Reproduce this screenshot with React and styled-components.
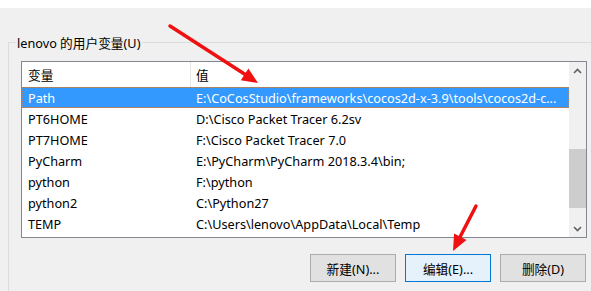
import styled, { createGlobalStyle } from 'styled-components'

const GlobalStyle = createGlobalStyle`
  html, body {
    margin: 0;
    padding: 0;
    background: #f0f0f0;
  }
  body {
    font-family: "Microsoft YaHei UI", "Noto Sans", "Noto Sans CJK SC", sans-serif;
    font-size: 12.7px;
    color: #000;
  }
`

const Page = styled.div`
  position: relative;
  width: 591px;
  height: 291px;
  overflow: hidden;
  background: #f0f0f0;
`

const TopStrip = styled.div`
  height: 8px;
  background: #fff;
`

const Group = styled.section`
  margin: 34px 0 0 8px;
  border-top: 1px solid #dcdcdc;
  border-left: 1px solid #dcdcdc;
  height: 260px;
`

const Legend = styled.div`
  width: fit-content;
  margin: -8px 0 0 7px;
  padding: 0 2px 0 1px;
  background: #f0f0f0;
  line-height: 16px;
  height: 16px;
`

const GroupBody = styled.div`
  padding: 10px 4px 0 12px;
`

const ListView = styled.div`
  display: flex;
  height: 175px;
  border: 1px solid #828790;
  background: #fff;
`

const ListMain = styled.div`
  flex: 1;
  display: flex;
  flex-direction: column;
`

const Row = styled.div`
  display: grid;
  grid-template-columns: 168px 1fr;
  height: ${({ $header }) => ($header ? '25px' : '21px')};
  align-items: center;
  background: ${({ $selected }) => ($selected ? '#3399ff' : 'transparent')};
  color: ${({ $selected }) => ($selected ? '#fff' : '#000')};
  outline: ${({ $selected }) => ($selected ? '1px dotted rgba(214, 130, 50, 0.75)' : 'none')};
  outline-offset: -1px;
  white-space: nowrap;
`

const Cell = styled.div`
  overflow: hidden;
  height: 100%;
  display: flex;
  align-items: center;
  border-left: ${({ $sep }) => ($sep ? '1px solid #e5e5e5' : 'none')};
  padding-left: ${({ $sep }) => ($sep ? '5px' : '6px')};
`

const ScrollBar = styled.div`
  width: 17px;
  display: flex;
  flex-direction: column;
  background: #f0f0f0;
`

const ScrollArrow = styled.div`
  height: 17px;
  display: flex;
  align-items: center;
  justify-content: center;
`

const Track = styled.div`
  flex: 1;
  display: flex;
  flex-direction: column;
`

const Thumb = styled.div`
  margin-top: 70px;
  height: 59px;
  background: #cdcdcd;
`

const ButtonRow = styled.div`
  display: flex;
  justify-content: flex-end;
  gap: 9px;
  margin-top: 16px;
  padding-right: 1px;
`

const Button = styled.button`
  width: 86px;
  height: 28px;
  padding: 0;
  font-family: inherit;
  font-size: 12.7px;
  color: #000;
  background: ${({ $focused }) => ($focused ? '#e5f1fb' : '#e1e1e1')};
  border: 1px solid ${({ $focused }) => ($focused ? '#0078d7' : '#adadad')};
  border-radius: 0;
`

const Annotation = styled.svg`
  position: absolute;
  left: 0;
  top: 0;
  pointer-events: none;
`

const rows = [
  ['Path', 'E:\\CoCosStudio\\frameworks\\cocos2d-x-3.9\\tools\\cocos2d-c...'],
  ['PT6HOME', 'D:\\Cisco Packet Tracer 6.2sv'],
  ['PT7HOME', 'F:\\Cisco Packet Tracer 7.0'],
  ['PyCharm', 'E:\\PyCharm\\PyCharm 2018.3.4\\bin;'],
  ['python', 'F:\\python'],
  ['python2', 'C:\\Python27'],
  ['TEMP', 'C:\\Users\\lenovo\\AppData\\Local\\Temp'],
]

function Chevron({ down }) {
  return (
    <svg width="9" height="6" viewBox="0 0 9 6">
      <path
        d={down ? 'M1 1 L4.5 4.5 L8 1' : 'M1 5 L4.5 1.5 L8 5'}
        fill="none"
        stroke="#606060"
        strokeWidth="1.6"
      />
    </svg>
  )
}

export default function App() {
  return (
    <Page>
      <GlobalStyle />
      <TopStrip />
      <Group>
        <Legend>lenovo 的用户变量(U)</Legend>
        <GroupBody>
          <ListView>
            <ListMain>
              <Row $header>
                <Cell>变量</Cell>
                <Cell $sep>值</Cell>
              </Row>
              {rows.map(([name, value], i) => (
                <Row key={name} $selected={i === 0}>
                  <Cell>{name}</Cell>
                  <Cell>{value}</Cell>
                </Row>
              ))}
            </ListMain>
            <ScrollBar>
              <ScrollArrow><Chevron /></ScrollArrow>
              <Track><Thumb /></Track>
              <ScrollArrow><Chevron down /></ScrollArrow>
            </ScrollBar>
          </ListView>
          <ButtonRow>
            <Button>新建(N)...</Button>
            <Button $focused>编辑(E)...</Button>
            <Button>删除(D)</Button>
          </ButtonRow>
        </GroupBody>
      </Group>
      <Annotation width="591" height="291" viewBox="0 0 591 291">
        <line x1="170" y1="26" x2="246" y2="75" stroke="#f01010" strokeWidth="3.5" strokeLinecap="round" />
        <polygon points="258,83 240.8,80.2 248.4,68.4" fill="#f01010" />
        <line x1="476" y1="206" x2="460" y2="237" stroke="#f01010" strokeWidth="3.5" strokeLinecap="round" />
        <polygon points="453,251 466.5,239.9 454.1,233.5" fill="#f01010" />
      </Annotation>
    </Page>
  )
}
